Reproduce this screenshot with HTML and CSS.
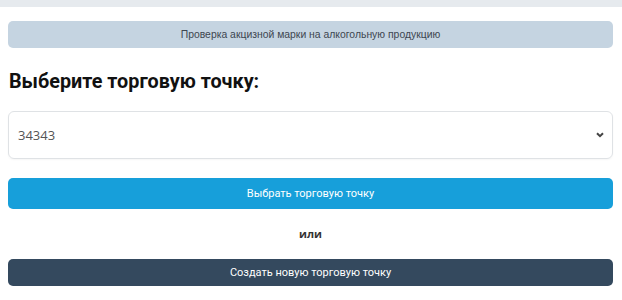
FILE: index.html
```html
<!DOCTYPE html>
<html lang="ru">
<head>
<meta charset="utf-8">
<link rel="stylesheet" href="styles.css">
</head>
<body>
<div class="topbar"></div>
<main class="page">
  <div class="banner">Проверка акцизной марки на алкогольную продукцию</div>
  <h1 class="title">Выберите торговую точку:</h1>
  <div class="select">
    <span class="select-value">34343</span>
    <svg class="chevron" width="8" height="6" viewBox="0 0 8 6"><path d="M1 1.2 L4 4.2 L7 1.2" fill="none" stroke="#444" stroke-width="2"/></svg>
  </div>
  <button class="btn btn-primary">Выбрать торговую точку</button>
  <div class="or">или</div>
  <button class="btn btn-dark">Создать новую торговую точку</button>
</main>
</body>
</html>
```
FILE: styles.css
```css
* { box-sizing: border-box; }
html, body { margin: 0; padding: 0; background: #fff; }
body { font-family: "Open Sans", "Noto Sans", sans-serif; color: #222; }
.topbar { height: 7px; background: #e6eaee; }
.page { padding: 14px 9px 0 8px; display: flex; flex-direction: column; }
.banner {
  height: 27px; background: #c5d4e1; border-radius: 5px;
  display: flex; align-items: center; justify-content: center;
  font-family: "Liberation Sans", Arial, sans-serif; font-size: 10.4px; color: #3d4650;
}
.title { margin: 20px 0 0 1px; font-family: Roboto, sans-serif; font-size: 19.8px; font-weight: 700; line-height: 28px; color: #111; }
.select {
  margin-top: 15px; height: 48px; border: 1px solid #dfe2e5; border-radius: 6px;
  display: flex; align-items: center; justify-content: space-between; padding: 0 8px 0 9px;
  box-shadow: 0 1px 2px rgba(0,0,0,0.04);
}
.select-value { font-size: 13px; color: #555; }
.chevron { margin-right: 0; }
.btn {
  border: 0; border-radius: 5px; color: #fff; font-family: Roboto, sans-serif;
  font-size: 11px; display: flex; align-items: center; justify-content: center; width: 100%;
}
.btn-primary { margin-top: 19px; height: 31px; background: #179fda; }
.or { margin-top: 17px; text-align: center; font-size: 11px; font-weight: 700; color: #333; line-height: 16px; }
.btn-dark { margin-top: 17px; height: 27px; background: #34495e; }
```
